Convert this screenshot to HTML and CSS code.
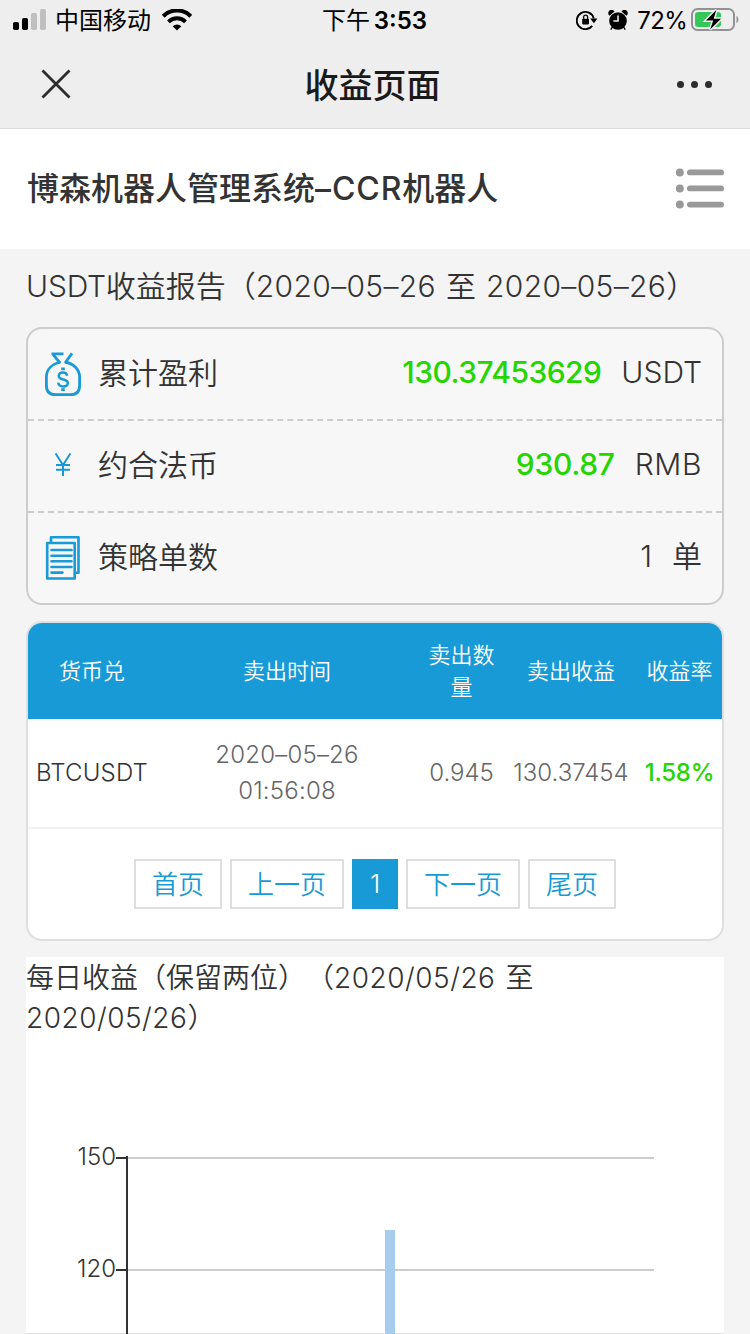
FILE: index.html
```html
<!DOCTYPE html>
<html lang="zh-CN">
<head>
  <meta charset="UTF-8" />
  <meta name="viewport" content="width=device-width, initial-scale=1" />
  <title>收益页面</title>
  <link rel="stylesheet" href="styles.css">
</head>
<body>
  <div class="statusbar">
    <div class="status-left">
      <svg class="signal" width="34" height="22" viewBox="0 0 34 22">
        <rect x="0" y="13" width="6" height="8" rx="1.8" />
        <rect x="9" y="9" width="6" height="12" rx="1.8" />
        <rect x="18" y="4" width="6" height="17" rx="1.8" fill="#bfbfbf" />
        <rect x="27" y="0" width="6" height="21" rx="1.8" fill="#bfbfbf" />
      </svg>
      <span class="carrier">中国移动</span>
      <svg class="wifi" width="30" height="22" viewBox="0 0 30 22">
        <path d="M1.2 7.2a19.500 19.500 0 0 1 27.600 0" fill="none" stroke="#000" stroke-width="4.200" />
        <path d="M6.500 12.800a12 12 0 0 1 17 0" fill="none" stroke="#000" stroke-width="4" />
        <path d="M10.700 17.200a6.200 6.200 0 0 1 8.600 0L15 21.600z" />
      </svg>
    </div>
    <div class="status-time">下午 <b>3:53</b></div>
    <div class="status-right">
      <svg class="rotate-lock" width="22" height="20" viewBox="0 0 22 20">
        <path d="M16.200 15.800a8.600 8.600 0 1 1 1.500-7.400" fill="none" stroke="#000" stroke-width="1.900" />
        <path d="M14.200 8.600h7.200l-3.500 4.600z" />
        <rect x="6.200" y="8.800" width="6.800" height="5.600" rx=".8" />
        <path d="M7.600 9V7.200a2 2 0 0 1 4 0V9" fill="none" stroke="#000" stroke-width="1.300" />
      </svg>
      <svg class="alarm" width="20" height="21" viewBox="0 0 20 21">
        <circle cx="10" cy="11" r="8.800" />
        <path d="M1.600 4.800a2.600 2.600 0 0 1 4-3.400zM18.400 4.800a2.600 2.600 0 0 0-4-3.400zM4.400 17l-1.600 2.600M15.600 17l1.600 2.600" stroke="#000" stroke-width="1.400" />
        <path d="M10 5.400V11H5.400" fill="none" stroke="#eee" stroke-width="1.600" />
      </svg>
      <span class="percent">72%</span>
      <svg class="battery" width="48" height="26" viewBox="0 0 48 26">
        <rect x="1" y="2" width="42" height="21" rx="5.500" fill="none" stroke="#929292" stroke-width="2" />
        <path d="M45.500 9c2.600 1 2.600 6.200 0 7.200z" fill="#929292" />
        <rect x="4" y="5" width="26" height="15" rx="3" fill="#35c759" />
        <path d="M25.300 3L15 13.400h7.200L19.200 22.500 30 11.800h-7.300z" stroke="#eee" stroke-width="3" />
        <path d="M25.300 3L15 13.400h7.200L19.200 22.500 30 11.800h-7.300z" />
      </svg>
    </div>
  </div>

  <div class="navbar">
    <svg class="close" width="30" height="30" viewBox="0 0 30 30">
      <path d="M1.500 1.500l27 27M28.500 1.500l-27 27" stroke="#2c2c2c" stroke-width="2.800" />
    </svg>
    <h1>收益页面</h1>
    <div class="more"><i></i><i></i><i></i></div>
  </div>

  <header>
    <h2>博森机器人管理系统<span>–CCR</span>机器人</h2>
    <svg class="menu" width="49" height="42" viewBox="0 0 49 42">
      <g fill="#999">
        <circle cx="4.800" cy="4.400" r="4" /><circle cx="4.800" cy="20.400" r="4" /><circle cx="4.800" cy="36.600" r="4" />
        <rect x="12" y="1.500" width="37" height="5.800" rx="2.900" />
        <rect x="12" y="17.500" width="37" height="5.800" rx="2.900" />
        <rect x="12" y="33.700" width="37" height="5.800" rx="2.900" />
      </g>
    </svg>
  </header>

  <main>
    <h3 class="report-title"><span class="usdt">USDT</span>收益报告（<span class="date">2020–05–26</span><span class="to">至</span><span class="date">2020–05–26</span>）</h3>

    <ul class="summary">
      <li>
        <svg class="icon" width="38" height="46" viewBox="0 0 38 46" fill="none" stroke="#189ad6" stroke-width="2.800">
          <path d="M7.500 2.800h12M8.500 2.800l7.500 9M28 2.400L21 12" />
          <path d="M16.500 11C8 13 2.400 18.500 2.400 26v8.500c0 6 3 9.200 9 9.200h15.200c6 0 9-3.200 9-9.200V26c0-7.500-6-13.500-14.600-15" />
          <path d="M23.200 24.800c-.4-2.200-2-3.200-4.200-3.200-2.400 0-4.200 1.200-4.200 3.300 0 4.900 9 2.200 9 7 0 2.300-2 3.500-4.800 3.500-2.600 0-4.500-1.300-4.800-3.700" stroke-width="2.500" />
          <path d="M17.200 17.900h3.600M17.200 38.600h3.600" stroke-width="2.600" />
        </svg>
        <span class="label">累计盈利</span>
        <b class="profit">130.37453629</b><span class="unit">USDT</span>
      </li>
      <li>
        <svg class="icon" width="38" height="46" viewBox="0 0 38 46" fill="none" stroke="#189ad6" stroke-width="2">
          <path d="M11.600 10.500l7.400 11.500 7.400-11.500M19 21.500v11.500M12 22h14M12 26.800h14" />
        </svg>
        <span class="label">约合法币</span>
        <b class="fiat">930.87</b><span class="unit rmb">RMB</span>
      </li>
      <li>
        <svg class="icon" width="38" height="46" viewBox="0 0 38 46" fill="none" stroke="#189ad6" stroke-width="2.600" stroke-linejoin="round">
          <path d="M7 7V2.300h27.500v35.500h-4" />
          <rect x="3.200" y="8" width="27.500" height="35.500" />
          <path d="M7.500 15h20M7.500 20.700h20M7.500 26.300h20M7.500 32h20M7.500 37.600h11" stroke-linecap="round" />
        </svg>
        <span class="label">策略单数</span>
        <span class="count">1</span><span class="unit">单</span>
      </li>
    </ul>

    <div class="records">
      <table>
        <colgroup><col class="c1"><col class="c2"><col class="c3"><col class="c4"><col class="c5"></colgroup>
        <thead>
          <tr><th>货币兑</th><th>卖出时间</th><th>卖出数量</th><th>卖出收益</th><th>收益率</th></tr>
        </thead>
        <tbody>
          <tr>
            <td class="pair">BTCUSDT</td>
            <td class="time">2020–05–26<br>01:56:08</td>
            <td>0.945</td>
            <td>130.37454</td>
            <td class="rate">1.58%</td>
          </tr>
        </tbody>
      </table>
      <div class="pages">
        <a>首页</a><a>上一页</a><a class="current">1</a><a>下一页</a><a>尾页</a>
      </div>
    </div>

    <section class="chart">
      <h3>每日收益（保留两位）（<span class="date">2020/05/26</span><span class="to">至</span><br><span class="date">2020/05/26</span>）</h3>
      <svg class="plot" width="698" height="290" viewBox="0 0 698 290">
        <path d="M102 114h526M102 226h526" stroke="#ccc" stroke-width="2" />
        <path d="M101 112v178M90 114h12M90 226h12" stroke="#333" stroke-width="2" />
        <rect x="359" y="186" width="10" height="104" fill="#a6cdee" />
        <text x="90" y="121">150</text>
        <text x="90" y="233">120</text>
      </svg>
    </section>
  </main>
</body>
</html>
```
FILE: styles.css
```css
* {
  box-sizing: border-box;
}

body {
  margin: 0;
  height: 1334px;
  overflow: hidden;
  background: #f4f4f4;
  color: #333;
  font-family: Inter, "Noto Sans CJK SC", sans-serif;
  font-weight: 350;
  text-spacing-trim: space-all;
}

h1, h2, h3, ul {
  margin: 0;
  padding: 0;
}

svg {
  display: block;
}

/* barra superior */
.statusbar {
  display: grid;
  grid-template-columns: 1fr auto 1fr;
  height: 40px;
  padding: 0 11px 0 13px;
  background: #eee;
  color: #000;
  font-size: 24px;
  font-weight: 400;
  line-height: 42px;
}

.status-left,
.status-right {
  display: flex;
  align-items: center;
  height: 40px;
}

.status-right {
  justify-content: flex-end;
}

.carrier {
  margin: 0 11px 0 8px;
  padding-top: 2px;
}

.status-time {
  margin-left: -3px;
}

.status-time b {
  font-weight: 600;
  margin-left: -3px;
}

.alarm {
  margin: 0 9px 0 10px;
}

.percent {
  margin-right: 4px;
  padding-top: 2px;
  letter-spacing: -.7px;
}

.navbar {
  display: flex;
  align-items: center;
  justify-content: space-between;
  height: 89px;
  padding: 0 38px 0 41px;
  background: #eee;
  border-bottom: 1px solid #d9d9d9;
}

.navbar h1 {
  margin-left: -3px;
  padding-top: 3px;
  color: #1a1a1a;
  font-size: 34px;
  font-weight: 500;
  line-height: 48px;
}

.more {
  display: flex;
  gap: 7px;
}

.more i {
  width: 7px;
  height: 7px;
  border-radius: 50%;
  background: #2c2c2c;
}

header {
  display: flex;
  align-items: center;
  justify-content: space-between;
  height: 120px;
  padding: 0 26px 0 27px;
  background: #fff;
}

header h2 {
  font-size: 32px;
  font-weight: 500;
  line-height: 48px;
}

header h2 span {
  font-weight: 550;
  letter-spacing: .9px;
}

main {
  padding: 16px 26px 0;
}

.report-title {
  height: 62px;
  font-size: 30px;
  font-weight: 350;
  line-height: 43px;
  white-space: nowrap;
}

.report-title .usdt {
  letter-spacing: -.2px;
}

.report-title .date {
  letter-spacing: .35px;
}

.to {
  margin: 0 10px;
}

.summary {
  height: 278px;
  background: #f7f7f7;
  border: 2px solid #ccc;
  border-radius: 16px;
  list-style: none;
}

.summary li {
  display: flex;
  align-items: center;
  height: 92px;
  padding: 0 20px 0 16px;
  border-bottom: 2px dashed #ccc;
  font-size: 30px;
  line-height: 44px;
}

.summary li:last-child {
  height: 90px;
  border-bottom: none;
}

.summary li > :not(svg) {
  padding-bottom: 4px;
}

.summary .label {
  margin-left: 16px;
  margin-right: auto;
  padding-bottom: 3px;
}

.summary b {
  color: #24d500;
  font-weight: 550;
  letter-spacing: -.55px;
}

.summary .fiat {
  letter-spacing: -.3px;
}

.unit {
  margin-left: 20px;
}

.rmb {
  letter-spacing: .6px;
}

.records {
  height: 320px;
  margin-top: 16px;
  background: #fff;
  border: 2px solid #dfdfdf;
  border-radius: 16px;
  overflow: hidden;
}

table {
  width: 694px;
  table-layout: fixed;
  border-spacing: 0;
  text-align: center;
}

.c1 { width: 128px; }
.c2 { width: 262px; }
.c3 { width: 87px; }
.c4 { width: 132px; }
.c5 { width: 85px; }

th {
  height: 96px;
  padding: 0 8px;
  background: #189ad6;
  color: #fff;
  font-size: 22px;
  font-weight: 350;
  line-height: 32px;
}

td {
  height: 110px;
  padding: 0;
  border-bottom: 2px solid #f2f2f2;
  color: #666;
  font-size: 24px;
  line-height: 36px;
}

td.time {
  letter-spacing: .2px;
}

td.pair {
  color: #333;
  letter-spacing: .2px;
}

td.rate {
  color: #24d500;
  font-weight: 550;
  letter-spacing: -.2px;
}

.pages {
  display: flex;
  justify-content: center;
  gap: 8px;
  padding-top: 30px;
}

.pages a {
  height: 50px;
  padding: 0 16px;
  border: 2px solid #dfdfdf;
  color: #189ad6;
  font-size: 26px;
  line-height: 48px;
}

.pages .current {
  width: 46px;
  padding: 0;
  background: #189ad6;
  border-color: #189ad6;
  color: #fff;
  line-height: 46px;
  text-align: center;
}

.chart {
  height: 377px;
  margin-top: 16px;
  background: #fff;
  border-bottom: 1px solid #e3e3e3;
}

.chart h3 {
  height: 87px;
  font-size: 28px;
  font-weight: 350;
  line-height: 40px;
  padding-top: 1px;
  white-space: nowrap;
}

.chart .date {
  letter-spacing: .5px;
}

.plot text {
  fill: #333;
  font-size: 24px;
  text-anchor: end;
}
```
